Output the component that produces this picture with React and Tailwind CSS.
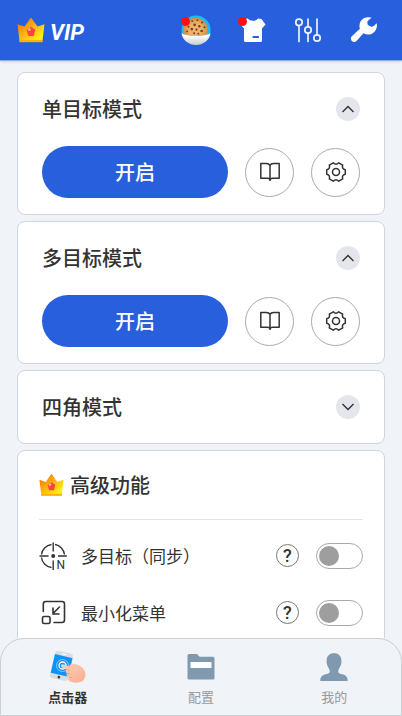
import React, { useState } from "react";

const Crown = ({ className }) => (
    <svg viewBox="0 0 28 26" className={className} aria-hidden="true">
        <defs>
            <linearGradient id="crownFill" x1="0" y1="0" x2="1" y2="1">
                <stop offset="0.15" stopColor="#f57c00" />
                <stop offset="0.5" stopColor="#fdb515" />
                <stop offset="0.85" stopColor="#ffee10" />
            </linearGradient>
        </defs>
        <path
            d="M0.5 7.2 7.5 9.5 14 0.5 20.5 9.5 27.5 7.2 25.6 23H2.4Z"
            fill="url(#crownFill)"
        />
        <path d="M2.3 23h23.4v2.2H2.3Z" fill="#ffb300" />
        <path d="m14 9.8 4.3 2.9-1.6 6.3h-5.4l-1.6-6.3Z" fill="#ff4438" />
        <path d="m10.4 12.7 2.8-2 .8 2.2-2 1.4Z" fill="#ffb0a4" />
    </svg>
);

const CookieIcon = () => (
    <svg viewBox="0 0 32 32" className="size-[30px]" aria-hidden="true">
        <defs>
            <linearGradient id="bowl" x1="0" y1="0" x2="0" y2="1">
                <stop offset="0.2" stopColor="#ffffff" />
                <stop offset="1" stopColor="#c6cbd3" />
            </linearGradient>
            <radialGradient id="cookie">
                <stop offset="0.5" stopColor="#eeb26a" />
                <stop offset="1" stopColor="#d48d42" />
            </radialGradient>
        </defs>
        <circle cx="16" cy="16" r="15.5" fill="#19bdf6" />
        <circle cx="15.5" cy="15.8" r="12.8" fill="url(#cookie)" />
        <g fill="#6e3f20">
            <circle cx="12" cy="6.5" r="1" />
            <circle cx="17.5" cy="5.5" r="1" />
            <circle cx="22.5" cy="8" r="1.1" />
            <circle cx="14.5" cy="10.5" r="1.4" />
            <circle cx="19.5" cy="12" r="1.3" />
            <circle cx="25" cy="13" r="1" />
            <circle cx="8" cy="12.5" r="1.1" />
            <circle cx="11.5" cy="15" r="1.4" />
            <circle cx="16.5" cy="15.5" r="1.2" />
            <circle cx="22" cy="17" r="1.4" />
            <circle cx="6.5" cy="17.5" r="1" />
            <circle cx="14" cy="19.5" r="1.1" />
            <circle cx="18.5" cy="20" r="1" />
        </g>
        <path
            d="M.5 19.5C8 23.5 24 23.5 31.5 19.5 30.5 27 23.5 32 16 32S1.5 27 .5 19.5Z"
            fill="url(#bowl)"
        />
    </svg>
);

const ShirtIcon = () => (
    <svg viewBox="0 0 26 26" className="size-[26px]" fill="white" aria-hidden="true">
        <path d="M8 1.5C9.5 4.5 16.5 4.5 18 1.5L21.5 2 25.5 7.5 22 11.5V23.5Q22 25 20.5 25H5.5Q4 25 4 23.5V11.5L.5 7.5 4.5 2Z" />
        <rect x="12.5" y="19" width="6.5" height="2" rx="0.5" fill="#275fdd" />
    </svg>
);

const SlidersIcon = () => (
    <svg
        viewBox="0 0 26 26"
        className="size-[26px]"
        fill="none"
        stroke="#eef3ff"
        strokeWidth="1.7"
        strokeLinecap="round"
        aria-hidden="true"
    >
        <circle cx="4" cy="5.3" r="3.2" />
        <path d="M4 8.7V24.5M13 2V9.5M13 16.5V24.5M22 2V17.5" />
        <circle cx="13" cy="13" r="3.2" />
        <circle cx="22" cy="21" r="3.2" />
    </svg>
);

const WrenchIcon = () => (
    <svg viewBox="0 0 28 28" className="size-7" fill="white" aria-hidden="true">
        <path d="M21.5 1.8C17 .5 12.5 2 10.5 5.5 9.3 7.8 9.2 10.5 9.9 12.7L1.8 20.3C.5 21.6.5 23.7 1.8 25 3.1 26.4 5.2 26.4 6.5 25L13.5 17.3C17.5 19.3 21.5 18.7 24.3 15.9 26.6 13.6 27.5 10.2 26.7 7.2L23.3 10.3Q22.3 11.1 21.1 10.6L18.6 9.5Q17.6 8.9 17.5 7.8L17.4 6.2Q17.4 5.2 18.2 4.5Z" />
    </svg>
);

const BookIcon = () => (
    <svg
        viewBox="0 0 22 22"
        className="size-[22px]"
        fill="none"
        stroke="#333"
        strokeWidth="1.5"
        strokeLinejoin="round"
        aria-hidden="true"
    >
        <path d="M11 4.5C10.2 2.8 9 2.5 7.5 2.5H1.8V17.3H8.5C10 17.3 10.7 17.7 11 19 11.3 17.7 12 17.3 13.5 17.3H20.2V2.5H14.5C13 2.5 11.8 2.8 11 4.5ZM11 4.5V20" />
    </svg>
);

const GearIcon = () => (
    <svg
        viewBox="0 0 22 22"
        className="size-[22px]"
        fill="none"
        stroke="#333"
        strokeWidth="1.5"
        strokeLinejoin="round"
        aria-hidden="true"
    >
        <path d="M20.3 8.7V13.3Q16.5 14.2 17.7 17.9L13.65 20.2Q11 17.4 8.35 20.2L4.3 17.9Q5.5 14.2 1.7 13.3V8.7Q5.5 7.8 4.3 4.1L8.35 1.8Q11 4.6 13.65 1.8L17.7 4.1Q16.5 7.8 20.3 8.7Z" />
        <circle cx="11" cy="11" r="3.5" />
    </svg>
);

const TargetIcon = () => (
    <svg
        viewBox="0 0 28 28"
        className="size-7 overflow-visible"
        fill="none"
        stroke="#333"
        strokeWidth="1.4"
        aria-hidden="true"
    >
        <path d="M12.5 2.5A11.5 11.5 0 0 0 2.5 12.5M16 2.5A11.5 11.5 0 0 1 25.5 12.5M2.5 15.5A11.5 11.5 0 0 0 12.5 25.5" />
        <path d="M14.2 .5V9.5M.5 14H9.5M19 14H27.8M14.2 18.5V28" />
        <circle cx="14.2" cy="14" r="2" fill="#333" stroke="none" />
        <text
            x="17.5"
            y="27"
            fontSize="12"
            fill="#333"
            stroke="none"
            fontFamily="Roboto, sans-serif"
        >
            N
        </text>
    </svg>
);

const MinimizeIcon = () => (
    <svg
        viewBox="0 0 28 28"
        className="size-7"
        fill="none"
        stroke="#333"
        strokeWidth="1.6"
        strokeLinecap="round"
        aria-hidden="true"
    >
        <path d="M4.3 12.5V5Q4.3 2.500 6.8 2.500H23Q25.500 2.500 25.500 5V21Q25.500 23.500 23 23.500H15" />
        <rect x="3.5" y="17.500" width="7.5" height="7" rx="1.5" />
        <path d="M20.500 8 14 14.500M14 9V15H20" />
    </svg>
);

const ClickerIcon = () => (
    <svg viewBox="0 0 38 34" className="h-[34px] w-[38px]" aria-hidden="true">
        <defs>
            <linearGradient id="hand" x1="0" y1="0" x2="1" y2="1">
                <stop offset="0" stopColor="#ffd0b8" />
                <stop offset="1" stopColor="#f9ad90" />
            </linearGradient>
        </defs>
        <g transform="rotate(13 13 16)">
            <rect x="3.5" y="2" width="18" height="28" rx="2.5" fill="#d9dde0" />
            <rect x="3.5" y="6" width="18" height="19" fill="#0d92f7" />
            <rect x="10" y="3.6" width="5" height="1" rx="0.5" fill="#fff" />
            <circle cx="12.5" cy="27.6" r="1.3" fill="#333" />
        </g>
        <g fill="none" stroke="#fff">
            <circle cx="13.5" cy="15.5" r="6" strokeOpacity="0.5" />
            <circle cx="13.5" cy="15.5" r="3.5" strokeWidth="1.3" />
        </g>
        <path
            d="M12.3 14.8C13.3 13.7 15 14.3 16.5 15.3L20.5 16.3C20.5 14.5 22 13.6 24 13.8 28 14 33 16.5 35.2 20 37.5 24 36.5 28.5 33.5 31 30 33.3 24 33 21 31.5 19 30.5 18.7 28.5 20 27.5 17.5 27 17 25 18 23.5 16.5 23 16.5 20.5 17.5 19.5L13 17.5C11.9 16.9 11.6 15.7 12.3 14.8Z"
            fill="url(#hand)"
        />
        <path
            d="M17.5 19.5 21 20.5M18 23.5 21.5 24M20 27.5 23 27.5"
            stroke="#ed9c7f"
            strokeWidth="0.7"
        />
    </svg>
);

const FolderIcon = () => (
    <svg viewBox="0 0 28 28" className="size-7" aria-hidden="true">
        <path
            d="M2 1H10L12.5 3.8H26Q27.5 3.8 27.5 5.3V25Q27.5 26.5 26 26.5H2Q.5 26.5 .5 25V2.5Q.5 1 2 1Z"
            fill="#8199ae"
        />
        <path d="M3.5 9H24.5V15H3.5Z" fill="#fff" />
    </svg>
);

const PersonIcon = () => (
    <svg viewBox="0 0 28 28" className="size-7" fill="#8199ae" aria-hidden="true">
        <path d="M14 .3C18.5 .3 21.3 3 21.3 7.3 21.3 9 21.7 8.9 21.2 10.8 20.5 14 18.5 16 18.3 17.5 18 20.5 19.5 20.7 22 21.2 26 22 27.8 24 27.7 28H.3C.2 24 2 22 6 21.2 8.5 20.7 10 20.5 9.7 17.5 9.5 16 7.5 14 6.8 10.8 6.3 8.9 6.7 9 6.7 7.3 6.7 3 9.5 .3 14 .3Z" />
    </svg>
);

const ModeCard = ({ title, defaultOpen }) => {
    const [open, setOpen] = useState(defaultOpen);

    return (
        <section className="rounded-lg border border-[#d0d5da] bg-white px-6">
            <div className="flex h-18 items-center justify-between">
                <h2 className="text-xl font-medium">{title}</h2>
                <button
                    type="button"
                    aria-label={title}
                    aria-expanded={open}
                    onClick={() => setOpen(!open)}
                    className="flex size-6 items-center justify-center rounded-full bg-[#e5e6ec]"
                >
                    <svg
                        viewBox="0 0 14 8"
                        className="h-2 w-3.5"
                        fill="none"
                        stroke="#333"
                        strokeWidth="1.4"
                    >
                        <path d={open ? "M1.5 7 7 1.5 12.5 7" : "M1.5 1 7 6.5 12.5 1"} />
                    </svg>
                </button>
            </div>
            {open && (
                <div className="flex items-center gap-[17px] pt-px pb-4">
                    <button
                        type="button"
                        className="h-[52px] flex-1 rounded-full bg-[#275fdd] text-xl font-medium text-white"
                    >
                        开启
                    </button>
                    <button
                        type="button"
                        aria-label="教程"
                        className="flex size-[49px] items-center justify-center rounded-full border border-[#aaa]"
                    >
                        <BookIcon />
                    </button>
                    <button
                        type="button"
                        aria-label="设置"
                        className="flex size-[49px] items-center justify-center rounded-full border border-[#aaa]"
                    >
                        <GearIcon />
                    </button>
                </div>
            )}
        </section>
    );
};

const FeatureRow = ({ id, icon, label }) => (
    <div className="flex h-[57px] items-center">
        {icon}
        <label htmlFor={id} className="ml-3.5 flex-1 text-[17px]">
            {label}
        </label>
        <button
            type="button"
            aria-label={`${label} 帮助`}
            className="mr-[17px] flex size-[23px] items-center justify-center rounded-full border border-[#777] font-[Roboto,sans-serif] text-lg leading-none font-medium"
        >
            ?
        </button>
        <input
            id={id}
            type="checkbox"
            role="switch"
            className="flex h-[26px] w-[47px] appearance-none items-center rounded-full border border-[#aaa] px-0.5 before:size-5 before:rounded-full before:bg-[#9e9e9e] checked:justify-end checked:before:bg-[#275fdd]"
        />
    </div>
);

const App = () => {
    return (
        <div className="flex h-screen flex-col bg-[#f0f3f8] font-['Noto_Sans_CJK_SC',sans-serif] text-[#333]">
            {/* Header */}
            <header className="flex h-[61px] shrink-0 items-center justify-between border-b border-[#93abe3] bg-[#275fdd] pr-6 pl-[17px] shadow-sm">
                <div className="flex items-center gap-[5px]">
                    <Crown className="h-[26px] w-7" />
                    <span className="pt-1 font-[Roboto,sans-serif] text-[22px] font-bold text-white italic">
                        VIP
                    </span>
                </div>
                <div className="flex items-center gap-[29px]">
                    <button type="button" aria-label="Cookie" className="relative">
                        <CookieIcon />
                        <span className="absolute top-0.5 left-0 size-[9px] rounded-full bg-[#ff0f0f]" />
                    </button>
                    <button type="button" aria-label="皮肤" className="relative">
                        <ShirtIcon />
                        <span className="absolute top-0 -left-0.5 size-[9px] rounded-full bg-[#ff0f0f]" />
                    </button>
                    <button type="button" aria-label="调节">
                        <SlidersIcon />
                    </button>
                    <button type="button" aria-label="工具">
                        <WrenchIcon />
                    </button>
                </div>
            </header>

            {/* Modes */}
            <main className="flex min-h-0 flex-1 flex-col gap-1.5 overflow-hidden px-[17px] pt-[11px] *:shrink-0">
                <ModeCard title="单目标模式" defaultOpen />
                <ModeCard title="多目标模式" defaultOpen />
                <ModeCard title="四角模式" defaultOpen={false} />

                {/* Advanced features */}
                <section className="rounded-t-lg border border-[#d0d5da] bg-white px-[21px]">
                    <div className="flex h-[69px] items-center gap-1.5 border-b border-[#e4e4e4]">
                        <Crown className="h-6 w-[25px]" />
                        <h2 className="text-xl font-medium">高级功能</h2>
                    </div>
                    <div className="pt-[7px]">
                        <FeatureRow id="sync" icon={<TargetIcon />} label="多目标（同步）" />
                        <FeatureRow id="minimize" icon={<MinimizeIcon />} label="最小化菜单" />
                    </div>
                </section>
            </main>

            {/* Bottom navigation */}
            <nav className="grid shrink-0 grid-cols-3 rounded-t-3xl border border-[#cbd0d5] bg-[#f0f3f8] pt-3 pb-2 text-[13px] leading-5">
                <a href="#clicker" className="flex flex-col items-center gap-1 font-bold">
                    <span className="flex h-8 items-center">
                        <ClickerIcon />
                    </span>
                    点击器
                </a>
                <a href="#config" className="flex flex-col items-center gap-1 text-[#999]">
                    <span className="flex h-8 items-center">
                        <FolderIcon />
                    </span>
                    配置
                </a>
                <a href="#mine" className="flex flex-col items-center gap-1 text-[#999]">
                    <span className="flex h-8 items-center">
                        <PersonIcon />
                    </span>
                    我的
                </a>
            </nav>
        </div>
    );
};

export default App;
